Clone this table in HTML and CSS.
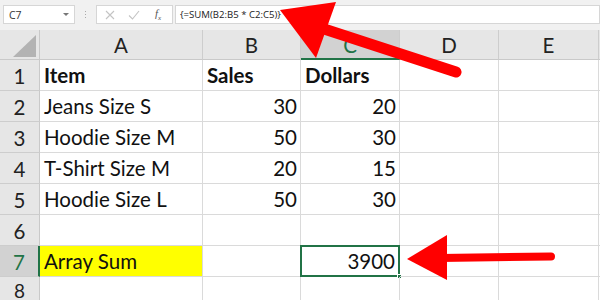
FILE: index.html
```html
<!DOCTYPE html>
<html>
<head>
<meta charset="utf-8">
<link rel="stylesheet" href="styles.css">
</head>
<body>
<div class="app">
  <div class="formula-bar">
    <div class="name-box"><span class="name">C7</span><span class="caret"></span></div>
    <div class="grip"><i></i><i></i><i></i></div>
    <div class="fx-box">
      <svg class="ico" width="10" height="10" viewBox="0 0 10 10"><path d="M1 1L9 9M9 1L1 9" stroke="#c4c4c4" stroke-width="1.1" fill="none"/></svg>
      <svg class="ico" width="12" height="10" viewBox="0 0 12 10"><path d="M1 5.5L4.5 9L11 1" stroke="#c4c4c4" stroke-width="1.1" fill="none"/></svg>
      <span class="fx">f<sub>x</sub></span>
    </div>
    <div class="formula">{=SUM(B2:B5 * C2:C5)}</div>
  </div>
  <div class="sheet">
    <div class="corner"><span class="tri"></span></div>
    <div class="ch">A</div>
    <div class="ch">B</div>
    <div class="ch sel">C</div>
    <div class="ch">D</div>
    <div class="ch">E</div>
    <div class="ch"></div>

    <div class="rh">1</div>
    <div class="c b">Item</div>
    <div class="c b">Sales</div>
    <div class="c b">Dollars</div>
    <div class="c"></div><div class="c"></div><div class="c"></div>

    <div class="rh">2</div>
    <div class="c">Jeans Size S</div>
    <div class="c n">30</div>
    <div class="c n">20</div>
    <div class="c"></div><div class="c"></div><div class="c"></div>

    <div class="rh">3</div>
    <div class="c">Hoodie Size M</div>
    <div class="c n">50</div>
    <div class="c n">30</div>
    <div class="c"></div><div class="c"></div><div class="c"></div>

    <div class="rh">4</div>
    <div class="c">T-Shirt Size M</div>
    <div class="c n">20</div>
    <div class="c n">15</div>
    <div class="c"></div><div class="c"></div><div class="c"></div>

    <div class="rh">5</div>
    <div class="c">Hoodie Size L</div>
    <div class="c n">50</div>
    <div class="c n">30</div>
    <div class="c"></div><div class="c"></div><div class="c"></div>

    <div class="rh">6</div>
    <div class="c"></div><div class="c"></div><div class="c"></div>
    <div class="c"></div><div class="c"></div><div class="c"></div>

    <div class="rh sel">7</div>
    <div class="c yellow">Array Sum</div>
    <div class="c"></div>
    <div class="c n active">3900<span class="handle"></span></div>
    <div class="c"></div><div class="c"></div><div class="c"></div>

    <div class="rh last">8</div>
    <div class="c"></div><div class="c"></div><div class="c"></div>
    <div class="c"></div><div class="c"></div><div class="c"></div>
  </div>
  <svg class="arrows" width="600" height="300" viewBox="0 0 600 300">
    <line x1="456" y1="72" x2="318" y2="27" stroke="#ff0000" stroke-width="11" stroke-linecap="round"/>
    <polygon points="280,10 336,2 316,58" fill="#ff0000"/>
    <line x1="440" y1="258" x2="551" y2="256.5" stroke="#ff0000" stroke-width="8" stroke-linecap="round"/>
    <polygon points="407,259 447,235 447,280" fill="#ff0000"/>
  </svg>
</div>
</body>
</html>
```
FILE: styles.css
```css
* { box-sizing: border-box; }
html, body { margin: 0; padding: 0; }
body { width: 600px; height: 300px; overflow: hidden; background: #fff; font-family: Lato, "Open Sans", sans-serif; }
.app { position: relative; width: 600px; height: 300px; overflow: hidden; }

.formula-bar { height: 30px; background: #f1f1f1; display: flex; align-items: flex-start; padding-top: 5px; padding-left: 3px; }
.name-box { width: 72px; height: 19px; background: #fff; border: 1px solid #d6d6d6; display: flex; align-items: center; justify-content: space-between; padding: 0 5px 0 5px; }
.name { font-family: "Open Sans", sans-serif; font-size: 10.5px; color: #333; }
.caret { width: 0; height: 0; border-left: 3px solid transparent; border-right: 3px solid transparent; border-top: 3px solid #777; }
.grip { width: 21px; height: 19px; display: flex; flex-direction: column; align-items: center; justify-content: center; gap: 2px; }
.grip i { display: block; width: 1px; height: 1px; background: #aaa; }
.fx-box { width: 77px; height: 19px; background: #fff; border: 1px solid #d6d6d6; display: flex; align-items: center; padding-left: 8px; gap: 13px; }
.fx { font-family: "Liberation Serif", serif; font-style: italic; font-size: 11px; color: #555; margin-left: 2px; }
.fx sub { font-size: 7px; }
.formula { flex: 1; height: 19px; margin-left: 2px; background: #fff; border: 1px solid #d6d6d6; font-family: "Open Sans", sans-serif; font-size: 9.6px; color: #222; padding-left: 4px; line-height: 17px; }

.sheet { display: grid; grid-template-columns: 40px 163px 98px 99px 99px 100px 20px; grid-template-rows: 30px repeat(8, 31px); }
.corner { background: #e6e6e6; border-right: 1px solid #c9c9c9; border-bottom: 1px solid #c9c9c9; position: relative; }
.tri { position: absolute; left: 13px; top: 5px; width: 0; height: 0; border-left: 23px solid transparent; border-bottom: 22px solid #b3b3b3; }
.ch { background: #e6e6e6; border-right: 1px solid #cdcdcd; border-bottom: 1px solid #c9c9c9; font-size: 20.5px; color: #222; display: flex; align-items: center; justify-content: center; padding-top: 1px; }
.ch.sel { background: #d2d2d2; color: #217346; border-bottom: 2px solid #217346; }
.rh { background: #e6e6e6; border-right: 1px solid #c9c9c9; border-bottom: 1px solid #cdcdcd; font-size: 20.5px; color: #222; display: flex; align-items: center; justify-content: center; padding-top: 2px; }
.rh.sel { background: #d2d2d2; color: #217346; border-right: 2px solid #217346; }
.rh.last { align-items: flex-start; padding-top: 2px; font-size: 19px; }
.c { border-right: 1px solid #dadada; border-bottom: 1px solid #dadada; font-size: 20.5px; color: #111; display: flex; align-items: flex-end; padding: 0 3px 3px 4px; white-space: nowrap; position: relative; }
.c.b { font-weight: bold; }
.c.n { justify-content: flex-end; }
.c.yellow { background: #ffff00; }
.c.active { border: 2px solid #217346; margin: -1px 0 0 -1px; padding-bottom: 2px; }
.handle { position: absolute; right: -4px; bottom: -4px; width: 5px; height: 5px; background: #217346; border: 1px solid #fff; }
.arrows { position: absolute; left: 0; top: 0; pointer-events: none; }
```
